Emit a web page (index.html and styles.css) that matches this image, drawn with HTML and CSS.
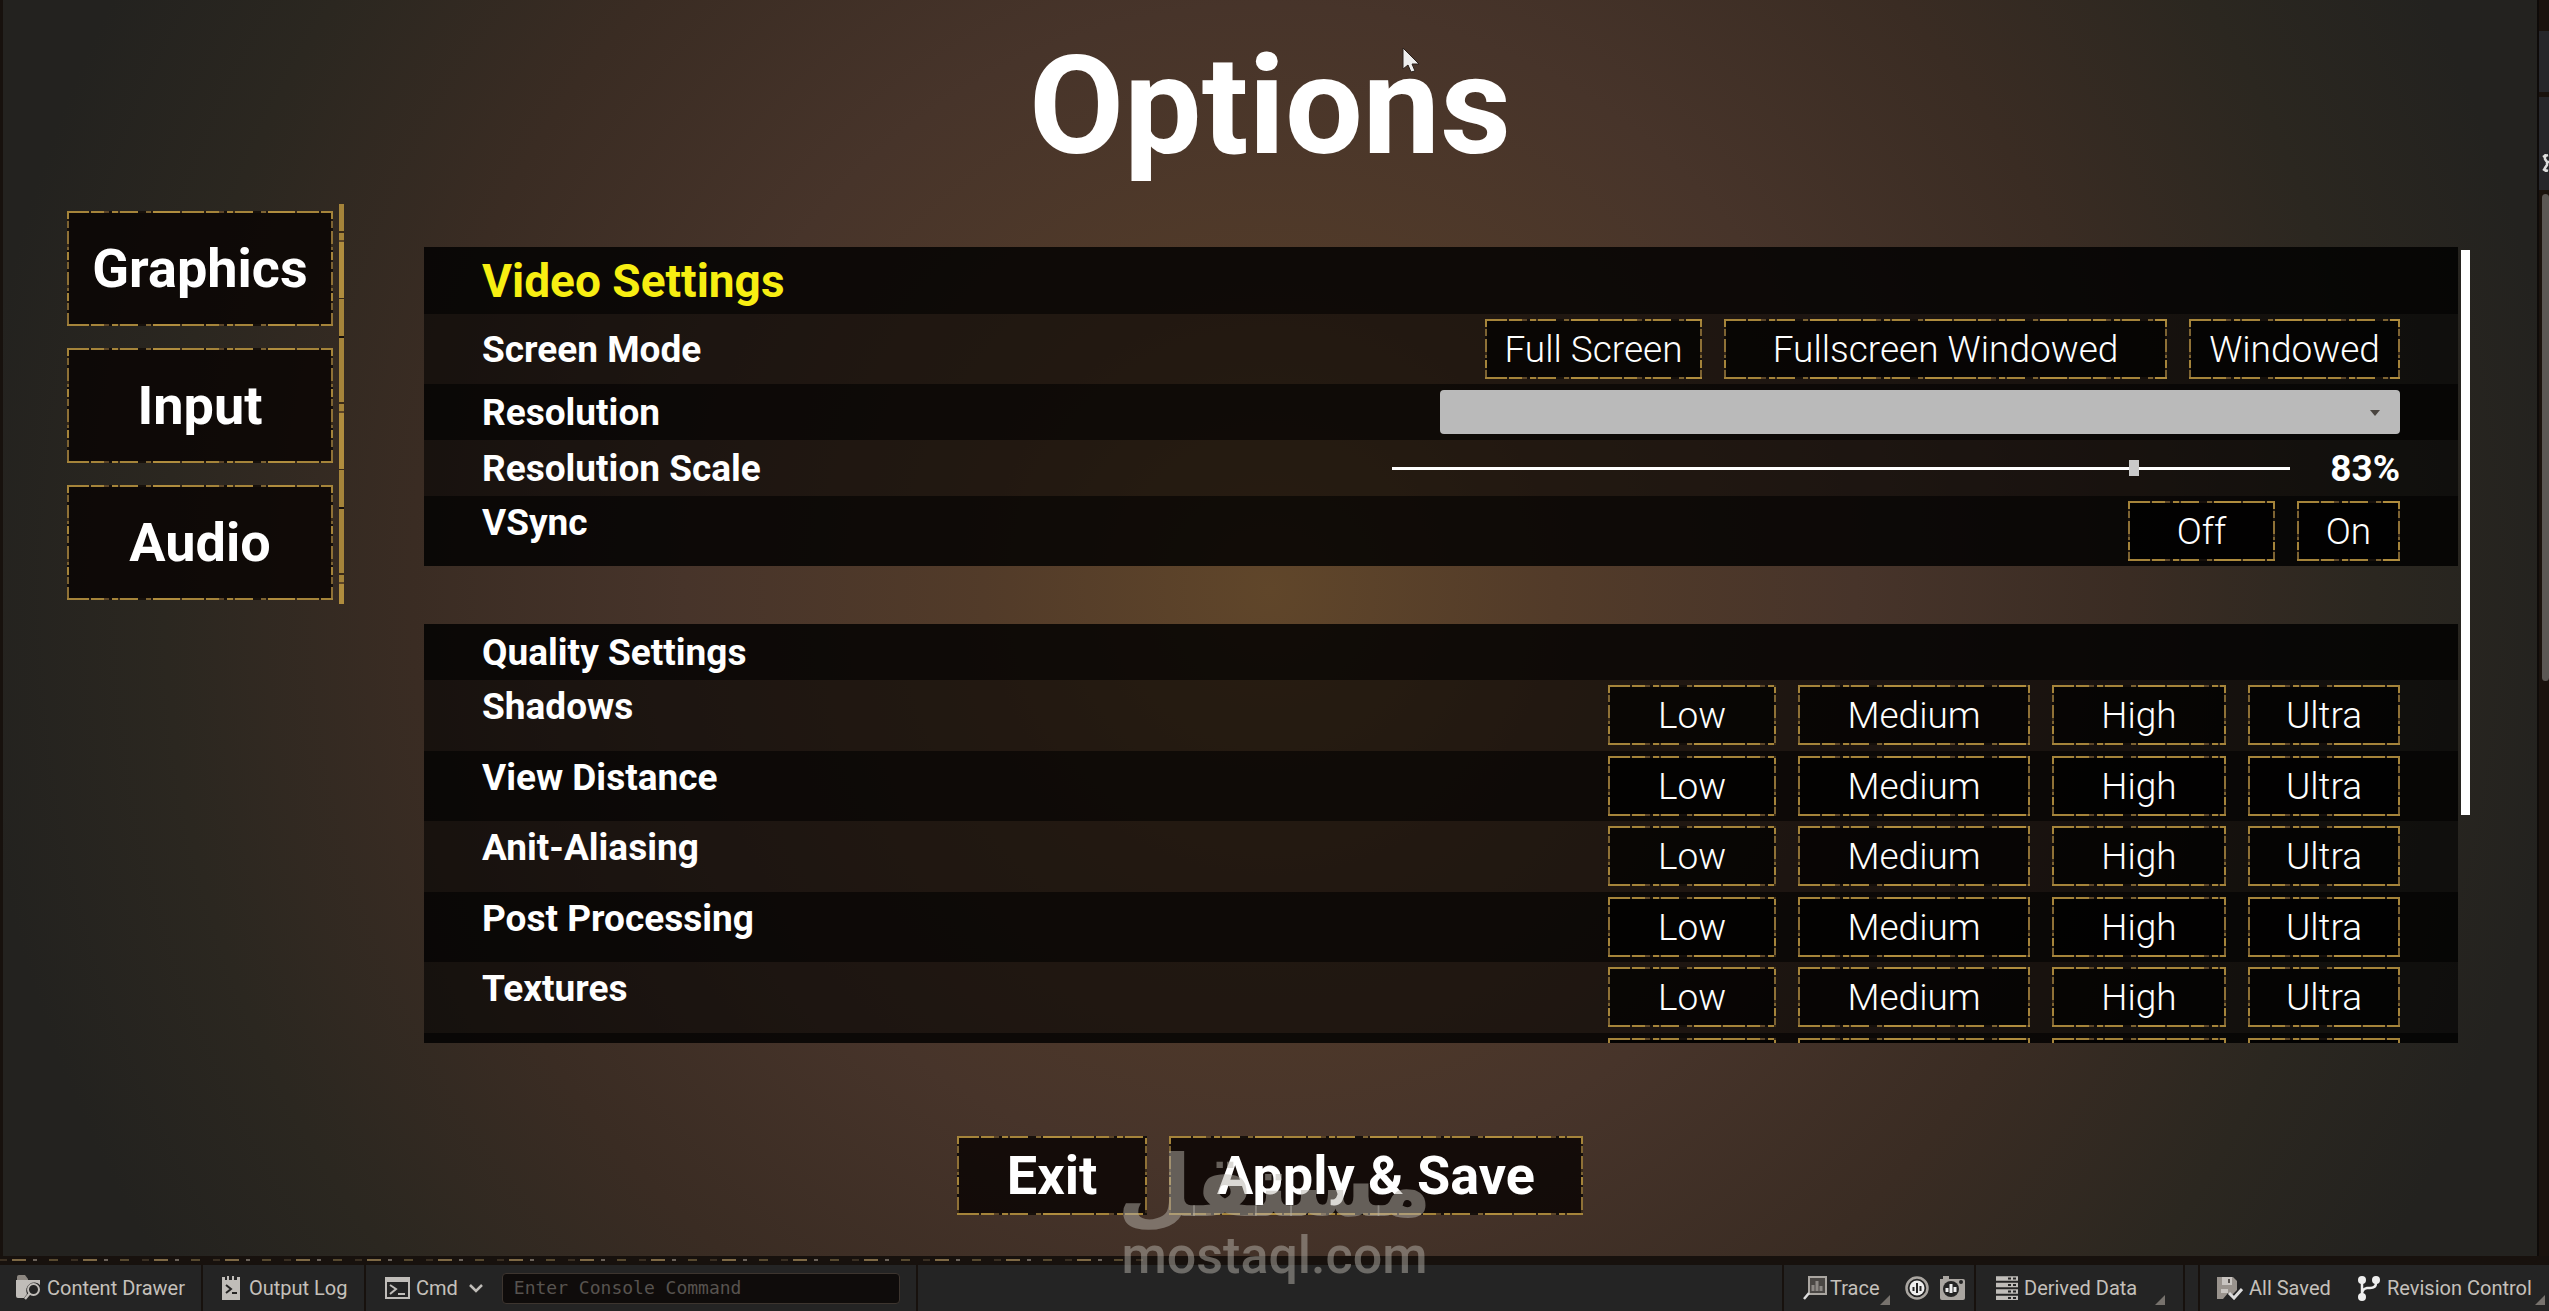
FILE: index.html
```
<!DOCTYPE html>
<html lang="en">
<head>
	<meta charset="UTF-8">
	<title>Options</title>
	<link rel="stylesheet" href="styles.css">
</head>
<body>
	<div class="editor">
		<main class="screen">
			<h1 class="title">Options</h1>
			<div class="content">
				<nav class="tabs">
					<button class="btn tab">Graphics</button>
					<button class="btn tab">Input</button>
					<button class="btn tab">Audio</button>
				</nav>
				<div class="panel">
					<section class="group">
						<h2 class="row head dark yellow">Video Settings</h2>
						<div class="row mode">
							<span class="label">Screen Mode</span>
							<div class="options">
								<button class="btn opt w-217">Full Screen</button>
								<button class="btn opt w-443">Fullscreen Windowed</button>
								<button class="btn opt w-211">Windowed</button>
							</div>
						</div>
						<div class="row short dark">
							<label class="label" for="resolution">Resolution</label>
							<div class="combo">
								<select id="resolution"><option></option></select>
								<svg class="arrow" viewBox="0 0 10 6"><path d="M0 0h10L5 6z"/></svg>
							</div>
						</div>
						<div class="row short">
							<label class="label" for="scale">Resolution Scale</label>
							<div class="scale">
								<input id="scale" type="range" min="0" max="100" value="83">
								<output for="scale">83%</output>
							</div>
						</div>
						<div class="row top dark">
							<span class="label">VSync</span>
							<div class="options">
								<button class="btn opt w-147">Off</button>
								<button class="btn opt w-103">On</button>
							</div>
						</div>
					</section>
					<section class="group">
						<h2 class="row short dark">Quality Settings</h2>
						<div class="row top">
							<span class="label">Shadows</span>
							<div class="levels">
								<button class="btn opt">Low</button>
								<button class="btn opt">Medium</button>
								<button class="btn opt">High</button>
								<button class="btn opt">Ultra</button>
							</div>
						</div>
						<div class="row top dark">
							<span class="label">View Distance</span>
							<div class="levels">
								<button class="btn opt">Low</button>
								<button class="btn opt">Medium</button>
								<button class="btn opt">High</button>
								<button class="btn opt">Ultra</button>
							</div>
						</div>
						<div class="row top">
							<span class="label">Anit-Aliasing</span>
							<div class="levels">
								<button class="btn opt">Low</button>
								<button class="btn opt">Medium</button>
								<button class="btn opt">High</button>
								<button class="btn opt">Ultra</button>
							</div>
						</div>
						<div class="row top dark">
							<span class="label">Post Processing</span>
							<div class="levels">
								<button class="btn opt">Low</button>
								<button class="btn opt">Medium</button>
								<button class="btn opt">High</button>
								<button class="btn opt">Ultra</button>
							</div>
						</div>
						<div class="row top">
							<span class="label">Textures</span>
							<div class="levels">
								<button class="btn opt">Low</button>
								<button class="btn opt">Medium</button>
								<button class="btn opt">High</button>
								<button class="btn opt">Ultra</button>
							</div>
						</div>
						<div class="row top dark">
							<span class="label"></span>
							<div class="levels">
								<button class="btn opt"></button>
								<button class="btn opt"></button>
								<button class="btn opt"></button>
								<button class="btn opt"></button>
							</div>
						</div>
					</section>
				</div>
				<div class="scrollbar"></div>
			</div>
			<div class="actions">
				<button class="btn exit">Exit</button>
				<button class="btn save">Apply &amp; Save</button>
			</div>
		</main>
		<aside class="edge">
			<svg class="gear" viewBox="0 0 8 18"><path d="M6 1L3 2v3l2 3h3M5 9v2l-2 3v2l3 1M1 3l3-2M1 15l3 2" fill="none" stroke="#ddd" stroke-width="2.5"/></svg>
			<div class="edge-thumb"></div>
		</aside>
	</div>
	<div class="strip"></div>
	<footer class="bar">
		<button class="tool drawer">
			<svg width="25" height="26" viewBox="0 0 25 26"><path d="M1 5V2q0-2 2-2h6l3 4v1z" fill="#8d8781"/><path d="M0 5h24v5a8 8 0 0 0-13 9l-3 4H2q-2 0-2-2z" fill="#c0bdb9"/><circle cx="17.500" cy="14.500" r="5.500" fill="none" stroke="#c0bdb9" stroke-width="2"/><path d="M14 18l-5 6" stroke="#c0bdb9" stroke-width="2.500"/></svg>
			Content Drawer
		</button>
		<button class="tool log">
			<svg width="18" height="26" viewBox="0 0 18 26"><path d="M0 2h3v3h2V1h2v4h3V1h2v4h3V2h3v23H0z" fill="#c0bdb9"/><path d="M4 10l5 4-5 4M10 18h5" fill="none" stroke="#242424" stroke-width="2"/></svg>
			Output Log
		</button>
		<div class="console">
			<button class="tool cmd">
				<svg width="25" height="22" viewBox="0 0 25 22"><rect x="1" y="1" width="23" height="20" fill="none" stroke="#c0bdb9" stroke-width="2"/><path d="M1 3h23" stroke="#c0bdb9" stroke-width="4"/><path d="M5 8l6 4-6 5M13 17h7" fill="none" stroke="#c0bdb9" stroke-width="2"/></svg>
				Cmd
				<svg class="chevron" width="14" height="9" viewBox="0 0 14 9"><path d="M1 1l6 6 6-6" fill="none" stroke="#c0bdb9" stroke-width="2.500"/></svg>
			</button>
			<input class="command" type="text" placeholder="Enter Console Command" aria-label="Console command">
		</div>
		<div class="tools trace-group">
			<button class="tool trace">
				<svg width="24" height="24" viewBox="0 0 24 24"><rect x="6" y="1" width="17" height="17" fill="#4a4744" stroke="#aaa6a1" stroke-width="2"/><path d="M10 15V9M14 15V5M18 15v-5" stroke="#8d8985" stroke-width="3"/><path d="M6 17l-5 6" stroke="#ddd" stroke-width="2.500"/></svg>
				Trace
				<svg class="corner" width="10" height="10" viewBox="0 0 10 10"><path d="M10 0v10H0z"/></svg>
			</button>
			<button class="tool" aria-label="Trace session">
				<svg width="24" height="24" viewBox="0 0 24 24"><circle cx="12" cy="12" r="10.500" fill="none" stroke="#aaa6a1" stroke-width="2.500"/><circle cx="12" cy="12" r="7.500" fill="#eee"/><path d="M8.500 15v-4M12 17V7M15.500 15v-5" stroke="#242424" stroke-width="2"/></svg>
			</button>
			<button class="tool" aria-label="Trace snapshot">
				<svg width="25" height="24" viewBox="0 0 25 24"><path d="M0 3h3V0h6v3h14q2 0 2 2v17q0 2-2 2H2q-2 0-2-2z" fill="#aaa6a1"/><circle cx="11" cy="13" r="8" fill="#242424"/><path d="M7 16v-4M11 17V8M15 16v-5" stroke="#eee" stroke-width="3"/><circle cx="21" cy="6" r="2" fill="#242424"/></svg>
			</button>
		</div>
		<button class="tool derived">
			<svg width="22" height="24" viewBox="0 0 22 24"><path d="M0 2.500h22M0 9h22M0 15.500h22M0 22h22" stroke="#c0bdb9" stroke-width="4.500"/><path d="M12 2.500h3M17 2.500h3M12 9h3M17 9h3M12 15.500h3M17 15.500h3M12 22h3M17 22h3" stroke="#242424" stroke-width="2"/></svg>
			Derived Data
			<svg class="corner far" width="10" height="10" viewBox="0 0 10 10"><path d="M10 0v10H0z"/></svg>
		</button>
		<button class="tool saved">
			<svg width="26" height="24" viewBox="0 0 26 24"><path d="M0 1h16l4 4v9l-6 6-3-3-5 6H0z" fill="#99938d"/><path d="M5 1h10v8H5zM4 13h7v4H4z" fill="#c8c4c0"/><path d="M12 3v4" stroke="#55504c" stroke-width="2"/><path d="M12 17l5 5 8-9" fill="none" stroke="#ddd" stroke-width="3"/></svg>
			All Saved
		</button>
		<button class="tool revision">
			<svg width="22" height="25" viewBox="0 0 22 25"><path d="M4 4v17M18 4v3q0 5-6 5H9q-5 1-5 6" fill="none" stroke="#eee" stroke-width="2.500"/><circle cx="4" cy="4" r="4" fill="#eee"/><circle cx="18" cy="4" r="4" fill="#eee"/><circle cx="4" cy="21" r="4" fill="#eee"/></svg>
			Revision Control
			<svg class="corner" width="10" height="10" viewBox="0 0 10 10"><path d="M10 0v10H0z"/></svg>
		</button>
	</footer>
	<div class="watermark">
		<span class="brand" lang="ar">مستقل</span>
		<span class="site">mostaql.com</span>
	</div>
	<svg class="cursor" width="18" height="26" viewBox="0 0 18 26"><path d="M1 1v21l5-4 3 7 4-1-3-7h7z" fill="#eee" stroke="#2a211c"/></svg>
</body>
</html>
```
FILE: styles.css
```
*{
	box-sizing: border-box;
	margin: 0;
	padding: 0;
}
body{
	height: 100vh;
	display: flex;
	flex-direction: column;
	overflow: hidden;
	position: relative;
	background: #17110d;
	color: #fff;
	font-family: Roboto, sans-serif;
}
button,input,select{
	font: inherit;
	color: inherit;
	border: 0;
	outline: 0;
}
.editor{
	flex: 1;
	min-height: 0;
	display: flex;
}
.screen{
	flex: 1;
	min-width: 0;
	display: flex;
	flex-direction: column;
	padding: 23px 0 41px;
	border-left: 3px solid #17110d;
	background: radial-gradient(1300px 1300px at 50% 590px, #60462a 0, #523b29 22%, #47342a 45%, #3a2c23 66%, #2b2720 85%, #23221f 100%);
}
.title{
	height: 166px;
	line-height: 166px;
	font-size: 138px;
	text-align: center;
}
.content{
	flex: 1;
	min-height: 0;
	display: flex;
	padding: 15px 67px 0 64px;
}

/* worn gold frame */
.btn{
	--h: repeating-linear-gradient(90deg, #a5843a 0 22px, #241a10 22px 24px, #a5843a 24px 37px, #5c4527 37px 42px, #16100b 42px 45px, #a5843a 45px 51px, #3a2b18 51px 53px, #a5843a 53px 71px, #16100b 71px 79px, #7d6332 79px 84px, #241a10 84px 86px, #b08d3e 86px 113px, #3a2b18 113px 115px);
	--v: repeating-linear-gradient(#a5843a 0 8px, #241a10 8px 10px, #7d6332 10px 17px, #16100b 17px 20px, #8f7136 20px 33px, #3a2b18 33px 36px, #7d6332 36px 39px, #16100b 39px 41px);
	background:
		var(--h) 0 0 / 100% 2px no-repeat,
		var(--h) 0 100% / 100% 2px no-repeat,
		var(--v) 0 0 / 2px 100% no-repeat,
		var(--v) 100% 0 / 2px 100% no-repeat,
		rgba(0,0,0,.72);
	white-space: nowrap;
}
.tabs{
	width: 277px;
	height: 400px;
	padding: 7px 11px 0 0;
	display: flex;
	flex-direction: column;
	gap: 22px;
	background: repeating-linear-gradient(#a5843a 0 27px, #3a2b18 27px 29px, #a5843a 29px 36px, #5c4527 36px 38px, #b08d3e 38px 94px, #3a2b18 94px 95px, #a5843a 95px 132px, #16100b 132px 134px, #a5843a 134px 171px) 100% 0 / 5px 100% no-repeat;
}
.tab{
	height: 115px;
	font-size: 54px;
	font-weight: bold;
}
.tab,.actions .btn{
	background-color: rgba(8,3,1,.8);
}
.panel{
	flex: 1;
	min-width: 0;
	overflow: hidden;
	margin: 43px 0 0 80px;
}
.group{
	margin-bottom: 58px;
}
.row{
	display: flex;
	justify-content: space-between;
	align-items: center;
	height: 71px;
	padding: 0 58px;
	font-size: 37px;
	font-weight: bold;
	background: rgba(0,0,0,.58);
}
.row.dark{
	background: rgba(0,0,0,.82);
}
.row.top.dark,.row.mode{
	height: 70px;
}
.row.head{
	height: 67px;
	font-size: 46px;
}
.row.yellow{
	color: #f7ee12;
}
.row.short{
	height: 56px;
}
.row.top{
	align-items: flex-start;
	padding-top: 5px;
}
.row.top .label{
	line-height: 44px;
}
.options{
	display: flex;
	gap: 22px;
}
.levels{
	display: grid;
	grid-template-columns: 168px 232px 174px 152px;
	gap: 22px;
}
.opt{
	height: 60px;
	font-weight: 300;
}
.w-217{ width: 217px; }
.w-443{ width: 443px; }
.w-211{ width: 211px; }
.w-147{ width: 147px; }
.w-103{ width: 103px; }
.combo{
	position: relative;
	width: 960px;
	height: 44px;
}
.combo select{
	display: block;
	width: 100%;
	height: 100%;
	appearance: none;
	border-radius: 4px;
	background: #bababa;
	color: #222;
}
.arrow{
	position: absolute;
	right: 20px;
	top: 20px;
	width: 10px;
	height: 6px;
	fill: #4a4540;
	pointer-events: none;
}
.scale{
	display: flex;
	align-items: center;
	gap: 38px;
}
.scale input{
	width: 898px;
	height: 20px;
	appearance: none;
	background: linear-gradient(#fff,#fff) 0 50% / 100% 3px no-repeat;
}
.scale input::-webkit-slider-thumb{
	appearance: none;
	width: 10px;
	height: 16px;
	background: #c9c9c9;
}
.scale output{
	width: 72px;
	text-align: right;
}
.scrollbar{
	width: 9px;
	height: 565px;
	margin: 46px 0 0 3px;
	background: #fff;
}
.actions{
	display: flex;
	justify-content: center;
	gap: 22px;
	margin-top: 93px;
}
.actions .btn{
	height: 79px;
	font-size: 54px;
	font-weight: bold;
}
.exit{
	width: 190px;
}
.save{
	width: 414px;
}
.edge{
	width: 12px;
	padding-left: 3px;
	background: linear-gradient(#1a120d 31px, #26262a 31px 92px, #1a120d 92px 97px, #26262a 97px 190px, #1a120d 190px);
	border-left: 2px solid #0e0b09;
}
.gear{
	display: block;
	width: 8px;
	height: 18px;
	margin-top: 154px;
}
.edge-thumb{
	width: 7px;
	height: 487px;
	margin-top: 22px;
	border-radius: 4px;
	background: #5b5754;
}
.strip{
	height: 9px;
	background: repeating-linear-gradient(90deg, #3a2f22 0 7px, #17110d 7px 12px, #7d6844 12px 26px, #17110d 26px 33px, #6b6259 33px 37px, #17110d 37px 49px, #57492f 49px 58px, #17110d 58px 71px) 0 3px / 45% 2px no-repeat, #17110d;
}

/* bottom tool bar */
.bar{
	height: 46px;
	display: flex;
	align-items: stretch;
	background: #242424;
	color: #c4c0bb;
	font-size: 20px;
	line-height: 46px;
}
.tool{
	display: flex;
	align-items: center;
	gap: 7px;
	background: none;
	position: relative;
	white-space: nowrap;
}
.drawer{
	width: 203px;
	padding-left: 16px;
	gap: 6px;
	border-right: 2px solid #17110d;
}
.log{
	width: 163px;
	padding-left: 19px;
	gap: 9px;
	border-right: 2px solid #17110d;
}
.console{
	width: 552px;
	display: flex;
	align-items: center;
	gap: 19px;
	padding-left: 19px;
	border-right: 2px solid #17110d;
}
.cmd{
	gap: 6px;
}
.chevron{
	margin-left: 5px;
}
.command{
	width: 398px;
	height: 31px;
	padding: 0 11px;
	border: 1px solid #3d352f;
	border-radius: 4px;
	background: #0f0c0b;
	font-family: "DejaVu Sans Mono", monospace;
	font-size: 18px;
}
.command::placeholder{
	color: #57534f;
}
.trace-group{
	width: 194px;
	margin-left: auto;
	display: flex;
	gap: 11px;
	padding-left: 19px;
	border-left: 2px solid #17110d;
	border-right: 2px solid #17110d;
}
.trace{
	width: 91px;
	gap: 3px;
}
.corner{
	position: absolute;
	right: 4px;
	bottom: 6px;
	fill: #77726d;
}
.corner.far{
	right: 18px;
}
.derived{
	width: 209px;
	padding-left: 20px;
	gap: 6px;
	border-right: 2px solid #17110d;
}
.saved{
	width: 149px;
	margin-left: 13px;
	padding-left: 17px;
	gap: 6px;
	border-left: 2px solid #17110d;
}
.revision{
	width: 202px;
	padding-left: 11px;
	gap: 7px;
}
.watermark{
	position: absolute;
	left: 50%;
	bottom: 30px;
	transform: translateX(-50%);
	display: flex;
	flex-direction: column;
	align-items: center;
	color: rgba(182,178,170,.5);
	pointer-events: none;
}
.brand{
	height: 90px;
	line-height: 90px;
	font-family: "DejaVu Sans", sans-serif;
	font-size: 86px;
	font-weight: bold;
}
.site{
	line-height: 50px;
	font-size: 52px;
	font-weight: 500;
}
.cursor{
	position: absolute;
	left: 55%;
	top: 47px;
}
```
